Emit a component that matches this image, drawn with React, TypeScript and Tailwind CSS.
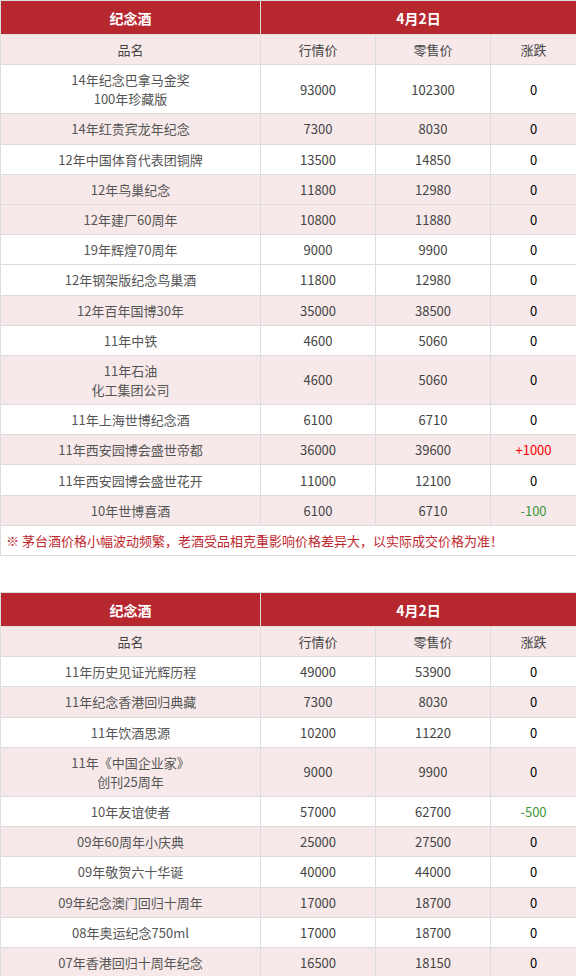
import React from 'react';

type Row = {
  name: string[];
  market: string;
  retail: string;
  change: string;
  pink?: boolean;
};

const TABLE_ONE: Row[] = [
  { name: ['14年纪念巴拿马金奖', '100年珍藏版'], market: '93000', retail: '102300', change: '0' },
  { name: ['14年红贵宾龙年纪念'], market: '7300', retail: '8030', change: '0', pink: true },
  { name: ['12年中国体育代表团铜牌'], market: '13500', retail: '14850', change: '0' },
  { name: ['12年鸟巢纪念'], market: '11800', retail: '12980', change: '0', pink: true },
  { name: ['12年建厂60周年'], market: '10800', retail: '11880', change: '0', pink: true },
  { name: ['19年辉煌70周年'], market: '9000', retail: '9900', change: '0' },
  { name: ['12年钢架版纪念鸟巢酒'], market: '11800', retail: '12980', change: '0' },
  { name: ['12年百年国博30年'], market: '35000', retail: '38500', change: '0', pink: true },
  { name: ['11年中铁'], market: '4600', retail: '5060', change: '0' },
  { name: ['11年石油', '化工集团公司'], market: '4600', retail: '5060', change: '0', pink: true },
  { name: ['11年上海世博纪念酒'], market: '6100', retail: '6710', change: '0' },
  { name: ['11年西安园博会盛世帝都'], market: '36000', retail: '39600', change: '+1000', pink: true },
  { name: ['11年西安园博会盛世花开'], market: '11000', retail: '12100', change: '0' },
  { name: ['10年世博喜酒'], market: '6100', retail: '6710', change: '-100', pink: true },
];

const TABLE_TWO: Row[] = [
  { name: ['11年历史见证光辉历程'], market: '49000', retail: '53900', change: '0' },
  { name: ['11年纪念香港回归典藏'], market: '7300', retail: '8030', change: '0', pink: true },
  { name: ['11年饮酒思源'], market: '10200', retail: '11220', change: '0' },
  { name: ['11年《中国企业家》', '创刊25周年'], market: '9000', retail: '9900', change: '0', pink: true },
  { name: ['10年友谊使者'], market: '57000', retail: '62700', change: '-500' },
  { name: ['09年60周年小庆典'], market: '25000', retail: '27500', change: '0', pink: true },
  { name: ['09年敬贺六十华诞'], market: '40000', retail: '44000', change: '0' },
  { name: ['09年纪念澳门回归十周年'], market: '17000', retail: '18700', change: '0', pink: true },
  { name: ['08年奥运纪念750ml'], market: '17000', retail: '18700', change: '0' },
  { name: ['07年香港回归十周年纪念'], market: '16500', retail: '18150', change: '0', pink: true },
];

const cell = 'border border-[#dddddd] px-1 py-[5.1px] leading-[19px] text-center';

function changeColor(v: string) {
  if (v.startsWith('+')) return 'text-[#ff0000]';
  if (v.startsWith('-')) return 'text-[#3a9a3a]';
  return 'text-black';
}

function PriceTable({ rows, note }: { rows: Row[]; note?: boolean }) {
  return (
    <table className="w-full table-fixed border-collapse">
      <colgroup>
        <col className="w-[260px]" />
        <col className="w-[115px]" />
        <col className="w-[115px]" />
        <col className="w-[86px]" />
      </colgroup>
      <thead>
        <tr className="bg-[#b7282e] text-white">
          <th className="border border-[#dddddd] py-[6.5px] text-[14px] leading-[20px] font-bold">纪念酒</th>
          <th colSpan={3} className="border border-[#dddddd] py-[6.5px] text-[14px] leading-[20px] font-bold">
            4月2日
          </th>
        </tr>
        <tr className="bg-[#f7e9ea] text-[#444]">
          <th className={`${cell} font-normal`}>品名</th>
          <th className={`${cell} font-normal`}>行情价</th>
          <th className={`${cell} font-normal`}>零售价</th>
          <th className={`${cell} font-normal`}>涨跌</th>
        </tr>
      </thead>
      <tbody>
        {rows.map((r, i) => (
          <tr key={i} className={r.pink ? 'bg-[#f7e9ea]' : 'bg-white'}>
            <td className={`${cell} text-[#555]`}>
              {r.name.map((line, j) => (
                <div key={j}>{line}</div>
              ))}
            </td>
            <td className={`${cell} text-[#444]`}>{r.market}</td>
            <td className={`${cell} text-[#444]`}>{r.retail}</td>
            <td className={`${cell} ${changeColor(r.change)}`}>{r.change}</td>
          </tr>
        ))}
        {note && (
          <tr className="bg-white">
            <td colSpan={4} className="border border-[#dddddd] px-[5px] py-[5.1px] leading-[19px] text-left text-[#c0272d]">
              ※ 茅台酒价格小幅波动频繁，老酒受品相克重影响价格差异大，以实际成交价格为准！
            </td>
          </tr>
        )}
      </tbody>
    </table>
  );
}

export default function App() {
  return (
    <div
      className="w-[576px] bg-white text-[13px]"
      style={{ fontFamily: '"Noto Sans CJK SC", "Noto Sans", sans-serif' }}
    >
      <PriceTable rows={TABLE_ONE} note />
      <div className="h-[36px]" />
      <PriceTable rows={TABLE_TWO} />
    </div>
  );
}
